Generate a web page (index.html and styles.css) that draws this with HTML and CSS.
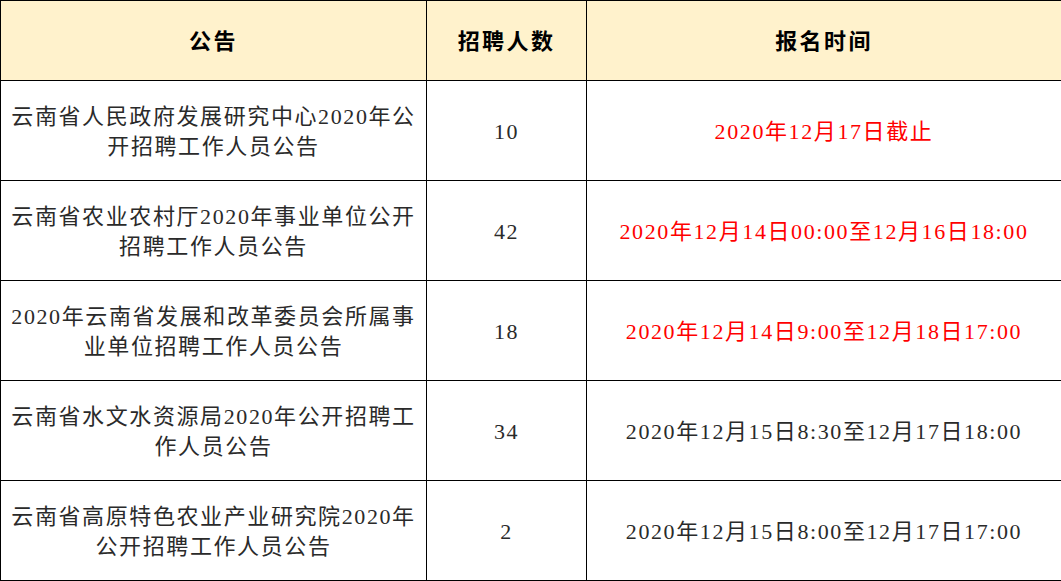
FILE: index.html
```html
<!DOCTYPE html>
<html lang="zh-CN">
<head>
<meta charset="utf-8">
<title>招聘公告</title>
<link rel="stylesheet" href="styles.css">
</head>
<body>
<table class="jobs">
  <colgroup>
    <col class="col-title">
    <col class="col-count">
    <col class="col-time">
  </colgroup>
  <thead>
    <tr class="head-row">
      <th>公告</th>
      <th>招聘人数</th>
      <th>报名时间</th>
    </tr>
  </thead>
  <tbody>
    <tr>
      <td class="title">云南省人民政府发展研究中心2020年公开招聘工作人员公告</td>
      <td>10</td>
      <td class="urgent">2020年12月17日截止</td>
    </tr>
    <tr>
      <td class="title">云南省农业农村厅2020年事业单位公开招聘工作人员公告</td>
      <td>42</td>
      <td class="urgent">2020年12月14日00:00至12月16日18:00</td>
    </tr>
    <tr>
      <td class="title">2020年云南省发展和改革委员会所属事业单位招聘工作人员公告</td>
      <td>18</td>
      <td class="urgent">2020年12月14日9:00至12月18日17:00</td>
    </tr>
    <tr>
      <td class="title">云南省水文水资源局2020年公开招聘工作人员公告</td>
      <td>34</td>
      <td>2020年12月15日8:30至12月17日18:00</td>
    </tr>
    <tr>
      <td class="title">云南省高原特色农业产业研究院2020年公开招聘工作人员公告</td>
      <td>2</td>
      <td>2020年12月15日8:00至12月17日17:00</td>
    </tr>
  </tbody>
</table>
</body>
</html>
```

FILE: styles.css
```css
html, body {
  margin: 0;
  padding: 0;
  background: #ffffff;
}

.jobs {
  width: 1061px;
  border-collapse: collapse;
  table-layout: fixed;
  font-family: "Liberation Serif", "Noto Sans CJK SC", serif;
  font-size: 22px;
  letter-spacing: 1.6px;
  line-height: 30px;
  color: #2a2a2a;
}

.col-title { width: 426px; }
.col-count { width: 160px; }
.col-time { width: 475px; }

.jobs th,
.jobs td {
  border: 1px solid #000000;
  text-align: center;
  vertical-align: middle;
  padding: 2px 8px 0;
}

.head-row th {
  height: 77px;
  background: #fff2cc;
  color: #000000;
  font-weight: bold;
  font-size: 22px;
  letter-spacing: 2.4px;
}

.jobs tbody td {
  height: 97px;
}

.jobs td.urgent {
  color: #ff0000;
}
```
